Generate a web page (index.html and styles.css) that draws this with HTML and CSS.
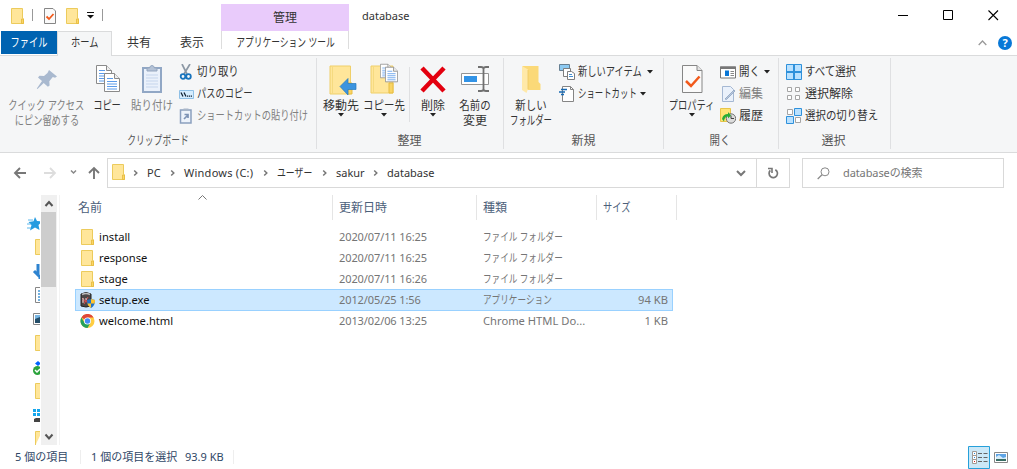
FILE: index.html
```html
<!DOCTYPE html>
<html lang="ja">
<head>
    <meta charset="UTF-8">
    <title>database</title>
    <link rel="stylesheet" href="styles.css">
</head>
<body>
    <!-- shared icons -->
    <svg class="defs" width="0" height="0">
        <symbol id="folder" viewBox="0 0 13 16">
            <path d="M.5.5h11v9.500l1 1v4.500H.5z" fill="#ffe69a" stroke="#eccb5c"/>
            <path d="M10.500 15.500v-4.500h2v4.500z" fill="#fbd766" stroke="#e5b93c" stroke-width=".8"/>
        </symbol>
        <symbol id="down" viewBox="0 0 6 4"><path d="M0 0h6L3 3.6z" fill="#222"/></symbol>
        <symbol id="chev" viewBox="0 0 6 8"><path d="M1.200 1.500L3.800 4 1.200 6.500" fill="none" stroke="#777" stroke-width="1.500"/></symbol>
        <symbol id="page" viewBox="0 0 16 19">
            <path d="M.5.5h10l5 5v13H.5z" fill="#fff" stroke="#8a8a8a"/>
            <path d="M10.500.5v5h5" fill="#eee" stroke="#8a8a8a"/>
            <path d="M3 5.500h6M3 8.500h10M3 11h10M3 13.500h10M3 16h10" stroke="#5b9bea"/>
        </symbol>
        <symbol id="prop" viewBox="0 0 21 28">
            <path d="M.5.5h14.500l5 5v22H.5z" fill="#fafafa" stroke="#868686"/>
            <path d="M15 .5v5h5" fill="#e4e4e4" stroke="#868686"/>
            <path d="M4 16l5 5 8.500-9.500" fill="none" stroke="#f25a1c" stroke-width="2.500"/>
        </symbol>
    </svg>

    <header class="top">
        <div class="quick">
            <svg class="q-folder" width="13" height="16"><use href="#folder"/></svg>
            <i class="bar"></i>
            <svg class="q-prop" width="12" height="16" viewBox="0 0 12 16"><path d="M.5.5h8.500l2.500 2.500v12.500H.5z" fill="#fafafa" stroke="#868686"/><path d="M2.500 8.500l2.500 2.500 4.500-5" fill="none" stroke="#f25a1c" stroke-width="1.800"/></svg>
            <svg class="q-folder2" width="13" height="16"><use href="#folder"/></svg>
            <svg class="q-more" width="8" height="7"><path d="M0 .5h7" stroke="#111"/><path d="M0 3h7L3.500 6.500z" fill="#111"/></svg>
            <i class="bar"></i>
        </div>
        <div class="context">管理</div>
        <div class="title">database</div>
        <div class="window-btns">
            <svg width="11" height="11"><path d="M0 5.500h10" stroke="#000"/></svg>
            <svg width="11" height="11"><path d="M.5.5h9v9h-9z" fill="none" stroke="#000"/></svg>
            <svg width="11" height="11"><path d="M.5.5l9.500 9.500M10 .5L.5 10" stroke="#000" stroke-width="1.100"/></svg>
        </div>
    </header>

    <nav class="tabs">
        <div class="tab file"><span class="narrow">ファイル</span></div>
        <div class="tab home"><span class="narrow">ホーム</span></div>
        <div class="tab share">共有</div>
        <div class="tab view">表示</div>
        <div class="tab tools"><span class="narrow">アプリケーション ツール</span></div>
        <div class="help">
            <svg width="9" height="6"><path d="M.7 5l3.800-4 3.800 4" fill="none" stroke="#999" stroke-width="1.300"/></svg>
            <span class="help-icon">?</span>
        </div>
    </nav>

    <section class="ribbon">
        <div class="group clipboard">
            <div class="tools-row">
                <div class="big off pin">
                    <svg width="22" height="28" viewBox="0 0 22 28"><path d="M13 5l8 6.500-2 1.200-2.200-.7-3.500 4.200.3 4.200-1.700 1.300-4.200-3.700L1.500 24l-.7-.6L6 16l-4-3.500 1.500-1.700 4.500.1L11.500 8z" fill="#a9b9cf"/></svg>
                    <span class="narrow">クイック アクセス</span>
                    <span class="narrow line2">にピン留めする</span>
                </div>
                <div class="big copy">
                    <svg width="24" height="28" viewBox="0 0 24 28"><use href="#page" width="16" height="19"/><use href="#page" x="8" y="8" width="16" height="19"/></svg>
                    <span class="narrow">コピー</span>
                </div>
                <div class="big off paste">
                    <svg width="20" height="28" viewBox="0 0 20 28"><path d="M1 3h18v24H1z" fill="#eaf1fb" stroke="#91a7c5" stroke-width="2"/><path d="M5 6V3h2.500Q8 .5 10 .5T12.500 3H15v3z" fill="#b4c2d6" stroke="#93a5be"/><path d="M4 10h12M4 13h12M4 16h12M4 19h12M4 22h12" stroke="#c5d5ec"/></svg>
                    <span class="mid">貼り付け</span>
                </div>
                <div class="smalls">
                    <div class="small"><svg width="14" height="16" viewBox="0 0 14 16"><path d="M3 0l5 10M11 0L5 10" stroke="#8c98a5" stroke-width="1.700"/><circle cx="4" cy="12.500" r="2.300" fill="none" stroke="#1874bd" stroke-width="1.800"/><circle cx="9.500" cy="12.500" r="2.300" fill="none" stroke="#1874bd" stroke-width="1.800"/></svg><span class="mid">切り取り</span></div>
                    <div class="small"><svg width="15" height="16" viewBox="0 0 15 16"><path d="M.5 4.500h14v8H.5z" fill="#d5edff" stroke="#8fc0e6"/><path d="M2 6.500l2 4M5 6.500l2 4" stroke="#123" stroke-width="1.300"/><path d="M8 10.200h5" stroke="#123" stroke-width="1.200" stroke-dasharray="1.200 .7"/></svg><span class="narrow">パスのコピー</span></div>
                    <div class="small off"><svg width="14" height="16" viewBox="0 0 14 16"><path d="M1.500 2h10.500v13H1.500z" fill="#edf3fb" stroke="#8ba0bf" stroke-width="1.500"/><path d="M4.500.5h5v2.500h-5z" fill="#a8b6c8"/><path d="M5 11l4-4M5.500 6.500H9V10" fill="none" stroke="#7d93b5" stroke-width="1.700"/></svg><span class="narrow">ショートカットの貼り付け</span></div>
                </div>
            </div>
            <div class="group-name"><span class="narrow">クリップボード</span></div>
        </div>

        <div class="group organize">
            <div class="tools-row">
                <div class="big move">
                    <svg width="28" height="30" viewBox="0 0 28 30"><path d="M1 1h20.500v28H1z" fill="#ffe69a" stroke="#efcf69"/><path d="M3.500 1v28" stroke="#f5da80"/><path d="M19 18h4v11h-4z" fill="#f9d464" stroke="#e7bd43"/><path d="M27 18.500v6h-8V30l-8-8.500 8-8v5z" fill="#3c94df" stroke="#257abf" stroke-width=".7"/></svg>
                    <span>移動先</span>
                    <svg class="arrow" width="6" height="4"><use href="#down"/></svg>
                </div>
                <div class="big copyto">
                    <svg width="28" height="31" viewBox="0 0 28 31"><path d="M1 3h22v27H1z" fill="#ffe69a" stroke="#efcf69"/><path d="M3.500 3v27" stroke="#f5da80"/><path d="M19 20h4v10h-4z" fill="#f9d464" stroke="#e7bd43"/><use href="#page" x="10" y="0" width="12" height="16"/><use href="#page" x="15" y="3" width="13" height="17"/></svg>
                    <span class="mid">コピー先</span>
                    <svg class="arrow" width="6" height="4"><use href="#down"/></svg>
                </div>
                <i class="split"></i>
                <div class="big delete">
                    <svg width="26" height="28" viewBox="0 0 26 28"><path d="M2 3l22 23M24 3L2 26" stroke="#e3000f" stroke-width="4.500"/></svg>
                    <span>削除</span>
                    <svg class="arrow" width="6" height="4"><use href="#down"/></svg>
                </div>
                <div class="big rename">
                    <svg width="28" height="28" viewBox="0 0 28 28"><path d="M.5 8.500h27v11H.5z" fill="#fff" stroke="#949494"/><path d="M3 11h13v6H3z" fill="#3293e6"/><path d="M22.500 3v22M17 2h3q2.500 0 2.500 2Q22.500 2 25 2h3M17 26h3q2.500 0 2.500-2 0 2 2.500 2h3" fill="none" stroke="#707070" stroke-width="1.800"/></svg>
                    <span class="mid">名前の</span>
                    <span class="line2">変更</span>
                </div>
            </div>
            <div class="group-name">整理</div>
        </div>

        <div class="group new">
            <div class="tools-row">
                <div class="big newfolder">
                    <svg width="19" height="28" viewBox="0 0 19 28"><path d="M.5 1h16v16l2 2v6H.5z" fill="#fbd978"/><path d="M0 1l6 3.500V24l-1.500 4L0 25z" fill="#ffe9a9"/><path d="M6 5v19" stroke="#edc861" stroke-width=".8"/></svg>
                    <span class="mid">新しい</span>
                    <span class="tight line2">フォルダー</span>
                </div>
                <div class="smalls">
                    <div class="small"><svg width="16" height="16" viewBox="0 0 16 16"><path d="M.5.5h10v6H.5z" fill="#8dcaf2" stroke="#667f92"/><path d="M4.500 4.500h7v8h-7z" fill="#fff" stroke="#7e7e7e"/><path d="M8.500 7.500h4l3 2v6h-7z" fill="#fff" stroke="#7e7e7e"/><path d="M10 10.500h3M10 12.500h4" stroke="#4490d2"/></svg><span class="narrow">新しいアイテム</span><svg class="arrow" width="6" height="4"><use href="#down"/></svg></div>
                    <div class="small shortcut"><svg width="16" height="16" viewBox="0 0 16 16"><path d="M3.500.5h8l3 3v12h-11z" fill="#fff" stroke="#858585"/><path d="M11.500.5v3h3" fill="none" stroke="#858585"/><path d="M2 3.500h6M0 6h6M2 8.500h3" stroke="#1769b2" stroke-width="1.300"/></svg><span class="tight">ショートカット</span><svg class="arrow" width="6" height="4"><use href="#down"/></svg></div>
                </div>
            </div>
            <div class="group-name">新規</div>
        </div>

        <div class="group open">
            <div class="tools-row">
                <div class="big properties">
                    <svg width="21" height="28"><use href="#prop"/></svg>
                    <span class="narrow">プロパティ</span>
                    <svg class="arrow" width="6" height="4"><use href="#down"/></svg>
                </div>
                <div class="smalls">
                    <div class="small openitem"><svg width="16" height="16" viewBox="0 0 16 16"><path d="M.5 3h15v11H.5z" fill="#fff" stroke="#777"/><path d="M0 2.500h16V5H0z" fill="#777"/><path d="M5 6.500h4V12H5z" fill="#0876d6"/><path d="M10.500 7.500H14M10.500 9.500H14M10.500 11.500H14" stroke="#888"/></svg><span class="mid">開く</span><svg class="arrow" width="6" height="4"><use href="#down"/></svg></div>
                    <div class="small off"><svg width="16" height="16" viewBox="0 0 16 16"><path d="M2.500.5h8l3 3v12h-11z" fill="#eaf1fb" stroke="#a5b8d3"/><path d="M5 13L14 4l1 1-8.500 8.500z" fill="#b9c8dd" stroke="#8da3c2" stroke-width=".8"/></svg><span>編集</span></div>
                    <div class="small"><svg width="16" height="16" viewBox="0 0 16 16"><path d="M.5.5h10v13H.5z" fill="#ffe475" stroke="#e9c54a"/><circle cx="11" cy="10.500" r="4.700" fill="#ddd" stroke="#727272"/><path d="M11 7.500v3h3" stroke="#444" fill="none"/><path d="M2 11q1-5 6-5V4l3 3.500-3 3V8.500q-3.500 0-4 5z" fill="#28ad35"/></svg><span>履歴</span></div>
                </div>
            </div>
            <div class="group-name"><span class="mid">開く</span></div>
        </div>

        <div class="group select">
            <div class="tools-row">
                <div class="smalls">
                    <div class="small"><svg width="16" height="16" viewBox="0 0 16 16"><path d="M.5.5h15v15H.5z" fill="#b9e1ff" stroke="#2f91db"/><path d="M8 0v16M0 8h16" stroke="#2f91db" stroke-width="2"/></svg><span class="mid">すべて選択</span></div>
                    <div class="small"><svg width="16" height="16" viewBox="0 0 16 16"><path d="M1.500 1.500h4v4h-4zM9.500 1.500h4v4h-4zM1.500 9.500h4v4h-4zM9.500 9.500h4v4h-4z" fill="#fff" stroke="#a5a5a5"/></svg><span>選択解除</span></div>
                    <div class="small"><svg width="16" height="16" viewBox="0 0 16 16"><path d="M1.500 1.500h5v5h-5zM9.500 9.500h5v5h-5z" fill="#fff" stroke="#a5a5a5"/><path d="M8.500.5h7v7h-7zM.5 8.500h7v7h-7z" fill="#b9e1ff" stroke="#2f91db"/></svg><span class="mid">選択の切り替え</span></div>
                </div>
            </div>
            <div class="group-name">選択</div>
        </div>
    </section>

    <section class="location">
        <svg class="arrows" width="88" height="14" viewBox="0 0 88 14">
            <path d="M13 7H2M7 2L2 7l5 5" fill="none" stroke="#777" stroke-width="1.900"/>
            <path d="M31 7h11M37 2l5 5-5 5" fill="none" stroke="#ddd" stroke-width="1.800"/>
            <path d="M58 4.500l2.500 2.500L63 4.500" fill="none" stroke="#888" stroke-width="1.500"/>
            <path d="M81 13V2M76 7l5-5 5 5" fill="none" stroke="#777" stroke-width="1.900"/>
        </svg>
        <div class="address">
            <svg class="addr-folder" width="13" height="16"><use href="#folder"/></svg>
            <svg class="sep" width="6" height="8"><use href="#chev"/></svg><span class="c-pc">PC</span>
            <svg class="sep" width="6" height="8"><use href="#chev"/></svg><span class="c-win">Windows (C:)</span>
            <svg class="sep" width="6" height="8"><use href="#chev"/></svg><span class="c-user"><span class="narrow">ユーザー</span></span>
            <svg class="sep" width="6" height="8"><use href="#chev"/></svg><span class="c-sakur">sakur</span>
            <svg class="sep" width="6" height="8"><use href="#chev"/></svg><span>database</span>
            <svg class="drop" width="10" height="8"><path d="M1 2l4 4 4-4" fill="none" stroke="#777" stroke-width="2"/></svg>
            <div class="refresh"><svg width="12" height="12"><path d="M8.300 2.700A4.200 4.200 0 1 1 3.300 3.400" fill="none" stroke="#777" stroke-width="1.700"/><path d="M1 1.500h4V6" fill="none" stroke="#777" stroke-width="1.600"/></svg></div>
        </div>
        <div class="search">
            <svg width="13" height="13"><circle cx="8" cy="4.800" r="4" fill="none" stroke="#888"/><path d="M5 7.800L.7 12" stroke="#888" stroke-width="1.200"/></svg>
            <span>databaseの検索</span>
        </div>
    </section>

    <main class="main">
        <aside class="side">
            <svg width="40" height="250" viewBox="0 0 40 250">
                <path d="M35 22l2 4 5 .5-3.500 3.500 1 5-4.500-2.500-5 3 1.500-5.500-3-3 5-.7z" fill="#259be0"/><path d="M28 25h5M27 29h4M27 33h4" stroke="#5cb8ec"/>
                <path d="M42 44.500h-6.500v15H42" fill="#ffe69a" stroke="#eccb5c"/>
                <path d="M38 69v11M34 76l6 6v2" stroke="#2e83d0" stroke-width="3" fill="none"/>
                <path d="M42 92.500h-6.500v15H42" fill="#fff" stroke="#868686"/><path d="M38 96h4M38 99h4M38 102h4M38 105h4" stroke="#4698d6" stroke-width="1.500"/>
                <path d="M42 118.500h-8.500v11H42" fill="#fff" stroke="#868686"/><path d="M35 120h6v5h-6z" fill="#79b7e4"/><path d="M35 124l5-2v6h-5z" fill="#244e69"/>
                <path d="M42 140.500h-6.500v15H42" fill="#ffe69a" stroke="#eccb5c"/>
                <path d="M38 166l3 2.500-3 2.500-3-2.500z" fill="#0062ff"/><circle cx="37.500" cy="175.500" r="4.500" fill="#2ba33c"/><path d="M35 175l2 2 3-3" fill="none" stroke="#fff" stroke-width="1.500"/>
                <path d="M42 188.500h-6.500v15H42" fill="#ffe69a" stroke="#eccb5c"/>
                <path d="M33 214h3v3h-3zM37 214h3v3h-3zM33 218h3v3h-3zM37 218h3v3h-3z" fill="#15a7ed"/><path d="M34 224l2-1h4v4h-6z" fill="#444"/>
                <path d="M42 236.500h-6.500V250" fill="#ffe69a" stroke="#eccb5c"/>
            </svg>
            <div class="scroll">
                <svg width="16" height="17"><path d="M4.500 11l3.500-4 3.500 4" fill="none" stroke="#555" stroke-width="2"/></svg>
                <div class="thumb"></div>
                <svg class="scroll-down" width="16" height="17"><path d="M4.500 6.500l3.500 4 3.500-4" fill="none" stroke="#555" stroke-width="2"/></svg>
            </div>
        </aside>
        <div class="files">
            <div class="head">
                <div>名前<svg class="sort" width="9" height="5"><path d="M.5 4.500l4-4 4 4" fill="none" stroke="#777"/></svg></div>
                <div>更新日時</div>
                <div>種類</div>
                <div><span class="narrow">サイズ</span></div>
            </div>
            <div class="row">
                <div class="name"><svg width="13" height="16"><use href="#folder"/></svg>install</div>
                <div class="date">2020/07/11 16:25</div><div><span class="narrow">ファイル フォルダー</span></div><div class="size"></div>
            </div>
            <div class="row">
                <div class="name"><svg width="13" height="16"><use href="#folder"/></svg>response</div>
                <div class="date">2020/07/11 16:25</div><div><span class="narrow">ファイル フォルダー</span></div><div class="size"></div>
            </div>
            <div class="row">
                <div class="name"><svg width="13" height="16"><use href="#folder"/></svg>stage</div>
                <div class="date">2020/07/11 16:26</div><div><span class="narrow">ファイル フォルダー</span></div><div class="size"></div>
            </div>
            <div class="row selected">
                <div class="name"><svg width="15" height="16" viewBox="0 0 15 16"><path d="M1 2q5-3 10 0v12q-5 2-10 0z" fill="#4b4747" stroke="#222"/><path d="M2 2.500q4-2 8 0" fill="none" stroke="#bbb" stroke-width="1.500"/><path d="M2 6l7 6M8 5l-4 7M2 9h7" stroke="#d65050"/><path d="M3 6v5M6 6v2" stroke="#fff" stroke-width=".8"/><path d="M7 8l4-1 4 1q0 6-4 8-4-2-4-8z" fill="#2474c6"/><path d="M11 7l4 1q0 2-.5 3.500H11zM7.400 11.500H11V16q-3-1.500-3.600-4.500z" fill="#ffc52d"/></svg>setup.exe</div>
                <div class="date">2012/05/25 1:56</div><div><span class="narrow">アプリケーション</span></div><div class="size">94 KB</div>
            </div>
            <div class="row">
                <div class="name"><svg width="15" height="14" viewBox="0 0 14 14"><circle cx="7" cy="7" r="7" fill="#ffcd42"/><path d="M7 7L.9 3.500A7 7 0 0 1 13.100 3.500H7z" fill="#df473b"/><path d="M.9 3.500A7 7 0 0 0 7 14l3-5.200H4z" fill="#24a15b"/><circle cx="7" cy="7" r="3.500" fill="#fff"/><circle cx="7" cy="7" r="2.700" fill="#438bf5"/></svg>welcome.html</div>
                <div class="date">2013/02/06 13:25</div><div>Chrome HTML Do...</div><div class="size">1 KB</div>
            </div>
        </div>
    </main>

    <footer class="status">
        <span class="count">5 個の項目</span>
        <span class="picked">1 個の項目を選択</span>
        <span class="bytes">93.9 KB</span>
        <div class="views">
            <svg width="22" height="23" viewBox="0 0 22 23"><path d="M.5.5h21v22H.5z" fill="#cce8f7" stroke="#26a0da"/><path d="M4.500 5.500h4v4h-4zM4.500 9.500h4v4h-4zM4.500 13.500h4v4h-4z" fill="#fff" stroke="#a09a94"/><path d="M10 7.500h4M15.500 7.500h4M10 11.500h4M15.500 11.500h4M10 15.500h4M15.500 15.500h4" stroke="#666"/><path d="M6 7h1v1H6zM6 11h1v1H6z" fill="#258cdb"/><path d="M6 15h1v1H6z" fill="#d22"/></svg>
            <svg width="14" height="11" viewBox="0 0 14 11"><path d="M.5.5h13v10H.5z" fill="#fff" stroke="#888"/><path d="M2 2h10v7H2z" fill="#5ea4e5"/><path d="M2 5l3-2 4 3 3-1v2H2z" fill="#d6ecfa"/><path d="M2 7h10v2H2z" fill="#386c63"/></svg>
        </div>
    </footer>
</body>
</html>
```
FILE: styles.css
```css
* {
    margin: 0;
    padding: 0;
    box-sizing: border-box;
}

body {
    width: 1017px;
    height: 469px;
    overflow: hidden;
    display: flex;
    flex-direction: column;
    background: #fff;
    color: #333;
    font-family: "Noto Sans", "Noto Sans CJK JP", sans-serif;
    font-size: 12px;
    line-height: 16px;
    white-space: nowrap;
}

svg {
    display: block;
    flex: none;
}

.defs {
    height: 0;
}

/* compressed kana */
.narrow, .mid, .tight {
    display: inline-block;
    transform: scaleX(0.77);
    transform-origin: left;
}

.mid {
    transform: scaleX(0.87);
}

.tight {
    transform: scaleX(0.7);
}

/* title bar */
.top {
    height: 31px;
    display: flex;
    flex: none;
}

.quick {
    width: 221px;
    display: flex;
    align-items: center;
    padding-left: 11px;
}

.quick .bar {
    width: 1px;
    height: 12px;
    margin-top: -1px;
    background: #999;
}

.q-folder { margin-right: 8px; }
.q-prop { margin: 0 10px 0 11px; }
.q-folder2 { margin-right: 8px; }
.q-more { margin-right: 7px; }

.context {
    width: 128px;
    margin-top: 4px;
    height: 27px;
    line-height: 27px;
    background: #e9cbfb;
    text-align: center;
}

.title {
    padding-left: 13px;
    line-height: 32px;
    font-size: 11px;
    flex: 1;
}

.window-btns {
    display: flex;
    gap: 34px;
    padding: 10px 18px 0 0;
}

/* tabs */
.tabs {
    height: 24px;
    display: flex;
    flex: none;
    line-height: 24px;
    text-align: center;
}

.tab .narrow {
    transform-origin: center;
}

.tab.tools .narrow {
    transform: scaleX(0.73);
}

.tab.file {
    width: 56px;
    height: 23px;
    margin-left: 1px;
    background: #0063b1;
    color: #fff;
}

.tab.home {
    width: 55px;
    height: 25px;
    background: #f5f6f7;
    border: 1px solid #dadbdc;
    border-bottom: none;
    line-height: 22px;
    z-index: 1;
}

.tab.share { width: 54px; }
.tab.view { width: 52px; }

.tab.tools {
    width: 128px;
    height: 18px;
    margin-left: 3px;
    display: flex;
    justify-content: center;
    border-left: 1px solid #ddd;
    border-right: 1px solid #ddd;
}

.help {
    display: flex;
    align-items: center;
    gap: 11px;
    margin-left: auto;
    padding-right: 5px;
}

.help-icon {
    width: 14px;
    height: 14px;
    border-radius: 50%;
    background: #0878d7;
    color: #fff;
    font-size: 11px;
    font-weight: bold;
    line-height: 14px;
}

/* ribbon */
.ribbon {
    height: 98px;
    flex: none;
    display: flex;
    background: #f5f6f7;
    border-top: 1px solid #dadbdc;
    border-bottom: 1px solid #dadbdc;
    padding: 2px 0 3px;
}

.group {
    display: flex;
    flex-direction: column;
    border-right: 1px solid #dfe0e2;
}

.clipboard { width: 317px; padding-left: 8px; }
.organize { width: 187px; padding-left: 3px; }
.new { width: 160px; padding-left: 4px; }
.open { width: 115px; padding-left: 4px; }
.select { width: 112px; padding-left: 7px; }

.tools-row {
    display: flex;
    height: 76px;
}

.group-name {
    text-align: center;
    line-height: 16px;
    color: #555;
}

.clipboard .group-name { padding-right: 8px; }
.organize .group-name { padding-right: 4px; }
.new .group-name { padding-right: 4px; }
.open .group-name { padding-right: 5px; }
.select .group-name { padding-right: 9px; }

.big {
    flex: none;
    display: flex;
    flex-direction: column;
    align-items: center;
    padding-top: 7px;
}

.big > svg:first-child {
    margin-bottom: 5px;
}

.big .narrow, .big .mid, .big .tight, .group-name .narrow, .group-name .mid {
    transform-origin: center;
}

.group-name .narrow {
    transform: scaleX(0.73);
}

.big .line2 {
    margin-top: -1px;
}

.big .arrow {
    margin-top: -1px;
}

.pin { width: 77px; }
.copy { width: 45px; }
.paste { width: 44px; }
.move { width: 42px; }
.copyto { width: 44px; }
.copyto > svg:first-child { margin: -2px 0 4px; }
.move > svg:first-child { margin: 0 0 3px 4px; }
.delete { width: 46px; }
.rename { width: 38px; }
.newfolder { width: 46px; }
.properties { width: 48px; }

.split {
    width: 1px;
    height: 55px;
    margin: 9px 0 0 3px;
    background: #dfe0e2;
}

.off {
    color: #808080;
}

.smalls {
    flex: none;
    padding: 3px 0 0 5px;
}

.open .smalls { padding-left: 4px; }
.select .smalls { padding-left: 0; }

.small {
    height: 22px;
    display: flex;
    align-items: center;
}

.small > svg:first-child {
    margin-right: 3px;
}

.small > svg[width="14"]:first-child {
    margin-right: 4px;
}

.small .arrow {
    margin-left: -14px;
}

.shortcut .arrow { margin-left: -22px; }
.openitem .arrow { margin-left: 1px; }

/* address bar */
.location {
    height: 42px;
    flex: none;
    display: flex;
    padding-top: 5px;
}

.arrows {
    margin: 8px 6px 0 13px;
}

.address {
    width: 683px;
    height: 30px;
    display: flex;
    align-items: center;
    border: 1px solid #d9d9d9;
    padding-left: 4px;
    font-size: 11px;
}

.addr-folder {
    margin: -2px 8px 0 0;
}

.address .sep { margin-right: 8px; }
.c-pc { width: 23px; }
.c-win { width: 79px; letter-spacing: 0.25px; }
.c-user { width: 45px; font-size: 11.500px; }
.c-sakur { width: 37px; }

.drop {
    margin-left: auto;
}

.refresh {
    height: 28px;
    width: 33px;
    margin-left: 10px;
    display: flex;
    align-items: center;
    justify-content: center;
    border-left: 1px solid #d9d9d9;
}

.search {
    width: 202px;
    height: 30px;
    margin-left: 12px;
    display: flex;
    align-items: center;
    gap: 13px;
    border: 1px solid #d9d9d9;
    padding-left: 14px;
    color: #767676;
    font-size: 11px;
    letter-spacing: -0.1px;
}

/* file list */
.main {
    height: 250px;
    display: flex;
    flex: none;
}

.side {
    width: 60px;
    display: flex;
    gap: 1px;
    border-right: 1px solid #f3f3f3;
}

.scroll {
    width: 16px;
    display: flex;
    flex-direction: column;
    background: #f0f0f0;
}

.thumb {
    width: 15px;
    height: 75px;
    background: #cdcdcd;
}

.scroll-down {
    margin-top: auto;
}

.files {
    margin-left: 15px;
    width: 602px;
    font-size: 11.2px;
}

.head, .row {
    display: grid;
    grid-template-columns: 258px 144px 120px 80px;
}

.head {
    height: 25px;
    margin-bottom: 6px;
    line-height: 25px;
    font-size: 12px;
    color: #4c607a;
}

.head div {
    border-right: 1px solid #e5e5e5;
    padding-left: 6px;
}

.head div:first-child {
    display: flex;
    padding-left: 3px;
}

.sort {
    margin-left: 96px;
}

.row {
    width: 598px;
    height: 22px;
    margin-bottom: -1px;
    border: 1px solid transparent;
    line-height: 20px;
    color: #757575;
}

.row > div {
    padding-left: 7px;
}

.row .name {
    display: flex;
    align-items: center;
    gap: 4px;
    padding-left: 4px;
    color: #111;
}

.row .name svg[width="13"] {
    margin: 0 1px;
}

.row .date {
    font-size: 11px;
    letter-spacing: -0.1px;
    padding-left: 5px;
}

.row > div:nth-child(3) {
    padding-left: 5px;
}

.row .size {
    width: 70px;
    padding: 0;
    text-align: right;
}

.row.selected {
    background: #cce8ff;
    border-color: #99d1ff;
}

/* status bar */
.status {
    height: 24px;
    display: flex;
    align-items: center;
    padding-left: 15px;
    font-size: 11px;
    color: #2f4766;
}

.status span {
    height: 14px;
    line-height: 14px;
}

.count {
    width: 66px;
    border-right: 1px solid #eee;
}

.picked {
    width: 94px;
    margin-left: 10px;
}

.bytes {
    width: 49px;
    border-right: 1px solid #eee;
}

.views {
    display: flex;
    align-items: center;
    gap: 4px;
    margin: 0 9px 0 auto;
}
```
